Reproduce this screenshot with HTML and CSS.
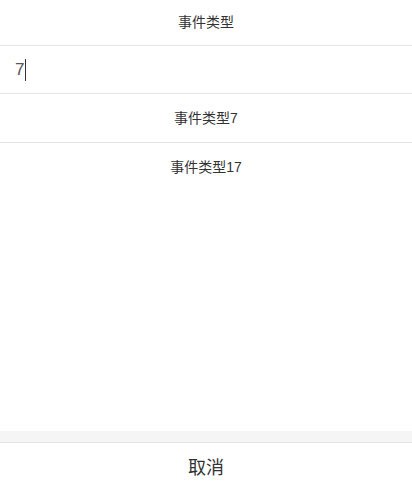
FILE: index.html
```html
<!DOCTYPE html>
<html>
<head>
    <title>事件类型</title>
    <link rel="stylesheet" href="styles.css">
</head>
<body>
    <div class="sheet">
        <div class="sheet-title">事件类型</div>
        <div class="search-row">
            <span class="search-value">7</span><span class="caret"></span>
        </div>
        <ul class="options">
            <li class="option">事件类型7</li>
            <li class="option option-last">事件类型17</li>
        </ul>
        <div class="spacer"></div>
        <div class="gap"></div>
        <div class="cancel">取消</div>
    </div>
</body>
</html>
```

FILE: styles.css
```css
html, body { margin: 0; padding: 0; height: 100%; background: #fff; }
body { font-family: "Liberation Sans", Arial, "Noto Sans CJK SC", sans-serif; color: #333; }
.sheet { display: flex; flex-direction: column; height: 489px; }
.sheet-title { height: 45px; line-height: 45px; text-align: center; font-size: 14px; color: #333; border-bottom: 1px solid #e5e5e5; }
.search-row { height: 47px; display: flex; align-items: center; padding-left: 15px; border-bottom: 1px solid #e5e5e5; }
.search-value { font-size: 17px; color: #555; }
.caret { width: 1px; height: 22px; background: #333; margin-left: 1px; }
.options { list-style: none; margin: 0; padding: 0; }
.option { height: 48px; line-height: 48px; text-align: center; font-size: 14px; color: #333; border-bottom: 1px solid #e5e5e5; }
.option-last { border-bottom: none; }
.spacer { flex: 1; }
.gap { height: 11px; background: #f5f5f5; border-bottom: 1px solid #e5e5e5; }
.cancel { height: 46px; line-height: 50px; text-align: center; font-size: 18px; color: #333; }
```
